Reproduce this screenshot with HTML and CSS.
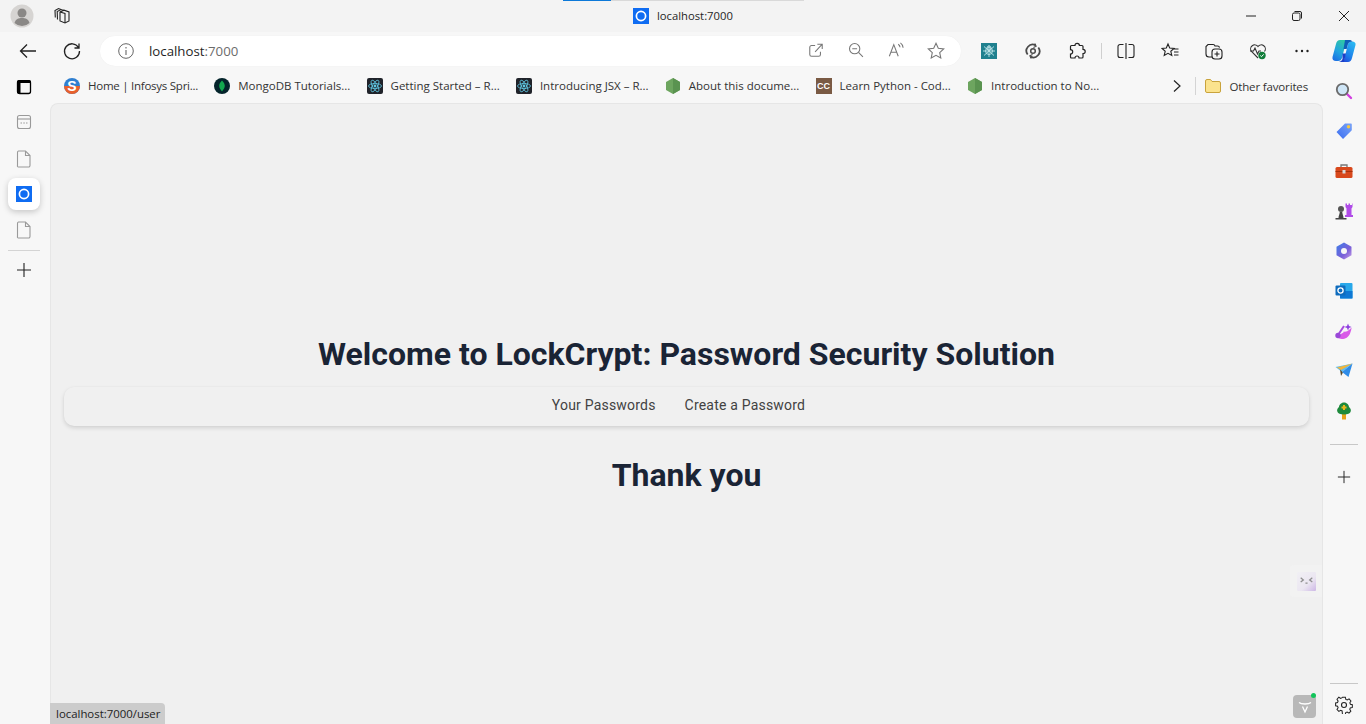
FILE: index.html
```html
<!DOCTYPE html>
<html lang="en">
<head>
<meta charset="utf-8">
<title>localhost:7000</title>
<link rel="stylesheet" href="styles.css">
</head>
<body>
<svg class="defs" aria-hidden="true">
  <defs>
    <symbol id="react" viewBox="0 0 16 16"><rect width="16" height="16" rx="2" fill="#20232a"/><g fill="none" stroke="#5fc8e3" stroke-width=".8"><ellipse cx="8" cy="8" rx="6.5" ry="2.5"/><ellipse cx="8" cy="8" rx="6.5" ry="2.5" transform="rotate(60 8 8)"/><ellipse cx="8" cy="8" rx="6.5" ry="2.5" transform="rotate(120 8 8)"/></g><circle cx="8" cy="8" r="1.4" fill="#5fc8e3"/></symbol>
    <symbol id="node" viewBox="0 0 16 16"><path d="M8 0l7 4v8l-7 4-7-4V4z" fill="#6da55f"/><path d="M8 0l7 4v8l-7 4z" fill="#5a9350"/></symbol>
    <symbol id="page" viewBox="0 0 16 18"><path d="M2.5 1h7l4.500 4.500v10a1.500 1.500 0 0 1-1.500 1.500h-10a1 1 0 0 1-1-1.500V2.500A1.500 1.500 0 0 1 2.500 1zM9.500 1v4.500H14" fill="none" stroke="#9a9a9a" stroke-width="1.100"/></symbol>
    <symbol id="plus" viewBox="0 0 16 16"><path d="M8 1v14M1 8h14" stroke="#222" stroke-width="1.100"/></symbol>
    <symbol id="site" viewBox="0 0 16 16"><rect width="16" height="16" fill="#0f6cf2"/><circle cx="8" cy="8" r="4.600" fill="none" stroke="#fff" stroke-width="1.700"/></symbol>
  </defs>
</svg>

<div class="browser">
  <header class="titlebar">
    <div class="title-left">
      <svg class="avatar" viewBox="0 0 24 24"><circle cx="12" cy="12" r="11.500" fill="#d6d4d2"/><circle cx="12" cy="9" r="4.500" fill="#8a8886"/><path d="M4.500 19c1-4 4-5 7.500-5s6.500 1 7.500 5a11 11 0 0 1-15 0z" fill="#8a8886"/></svg>
      <svg class="tabs-icon" viewBox="0 0 18 18"><g fill="none" stroke="#222" stroke-width="1.100"><path d="M7 5l4-1.800 5 1.800v9l-4 2-5-2z"/><path d="M12 16V6.500L7 5"/><path d="M4.500 12.500L4.200 4.500 8 2.500l3 1"/><path d="M2.300 10.500L2 3.500 5.500 1.500 8 2.400"/></g></svg>
    </div>
    <div class="tab-progress"><span class="tab-progress-done"></span></div>
    <div class="title-center">
      <svg class="i16"><use href="#site"/></svg>
      <span>localhost:7000</span>
    </div>
    <div class="window-controls">
      <svg class="win" viewBox="0 0 12 12"><path d="M1 6h10" stroke="#222" stroke-width="1"/></svg>
      <svg class="win" viewBox="0 0 12 12"><g fill="none" stroke="#222" stroke-width="1"><rect x="1.500" y="3" width="7.500" height="7.500" rx="1.500"/><path d="M3.500 1.500h5.500a1.500 1.500 0 0 1 1.500 1.500v5.500"/></g></svg>
      <svg class="win" viewBox="0 0 12 12"><path d="M1 1l10 10M11 1L1 11" stroke="#222" stroke-width="1"/></svg>
    </div>
  </header>

  <div class="toolbar">
    <div class="cell"><svg class="i20" viewBox="0 0 20 20"><path d="M18 10H2.500M9 3.500L2.500 10 9 16.500" fill="none" stroke="#222" stroke-width="1.300"/></svg></div>
    <div class="cell"><svg class="i20" viewBox="0 0 20 20"><path d="M16.500 6.500A7.500 7.500 0 1 0 17.500 10M17 2.500v4.500h-4.500" fill="none" stroke="#222" stroke-width="1.300"/></svg></div>
    <div class="address">
      <svg class="info" viewBox="0 0 16 16"><circle cx="8" cy="8" r="7.300" fill="none" stroke="#666" stroke-width="1"/><path d="M8 7v5M8 4v1.500" stroke="#666" stroke-width="1.100"/></svg>
      <span class="url">localhost<span class="port">:7000</span></span>
      <div class="address-icons">
        <span class="addr-cell"><svg class="i16" viewBox="0 0 18 18"><path d="M8 4H4a2 2 0 0 0-2 2v8a2 2 0 0 0 2 2h8a2 2 0 0 0 2-2v-3M8 11l7.500-8M10.500 2.500h5.500V8" fill="none" stroke="#777" stroke-width="1.200"/></svg></span>
        <span class="addr-cell"><svg class="i16" viewBox="0 0 18 18"><circle cx="7.500" cy="7.500" r="5.800" fill="none" stroke="#777" stroke-width="1.200"/><path d="M4.800 7.500h5.400M11.800 11.800l5 5" stroke="#777" stroke-width="1.200"/></svg></span>
        <span class="addr-cell"><svg class="i16" viewBox="0 0 18 18"><path d="M1.500 16L6.500 3l5 13M3.200 11.500h6.600M11.500 2.500c1.500 1 2 2.200 2 3.500M14 1c2 1.500 3 3 3 5.500" fill="none" stroke="#777" stroke-width="1.200"/></svg></span>
        <span class="addr-cell"><svg class="i18" viewBox="0 0 18 18"><path d="M9 1.300l2.300 5 5.400.6-4 3.700 1.100 5.400L9 13.300 4.200 16l1.100-5.400-4-3.700 5.400-.6z" fill="none" stroke="#777" stroke-width="1.100"/></svg></span>
      </div>
    </div>
    <div class="tools">
      <div class="cell"><svg class="i16" viewBox="0 0 16 16"><rect width="16" height="16" fill="#20818f"/><g fill="none" stroke="#bfe6ea" stroke-width=".9"><circle cx="8" cy="5" r="2"/><circle cx="8" cy="8" r="3.500"/><path d="M8 2v12M3 3.500l10 9M13 3.500l-10 9M2 8h12"/></g></svg></div>
      <div class="cell"><svg class="i16" viewBox="0 0 18 18"><g fill="none" stroke="#4a4a4a" stroke-width="2"><path d="M3 13A7 7 0 0 1 12 2.700"/><path d="M15 5a7 7 0 0 1-9 10.300"/></g><circle cx="9" cy="9" r="2.600" fill="none" stroke="#4a4a4a" stroke-width="1.700"/><path d="M11 .5l1.500 3.200L9.500 5M7 17.500l-1.500-3.200 3-1.300" fill="none" stroke="#4a4a4a" stroke-width="1.300"/></svg></div>
      <div class="cell"><svg class="i18" viewBox="0 0 18 18"><path d="M7 3.500a2.200 2.200 0 0 1 4.400 0H14a1 1 0 0 1 1 1v2.800a2.200 2.200 0 0 1 0 4.400V15a1 1 0 0 1-1 1h-3a2 2 0 0 0-4 0H3.500a1 1 0 0 1-1-1v-3a2.200 2.200 0 0 0 0-4.400V4.500a1 1 0 0 1 1-1z" fill="none" stroke="#222" stroke-width="1.200"/></svg></div>
      <span class="tool-sep"></span>
      <div class="cell"><svg class="i18" viewBox="0 0 18 18"><path d="M6.500 2.500H3a2 2 0 0 0-2 2v9a2 2 0 0 0 2 2h3.500M11.500 2.500H15a2 2 0 0 1 2 2v9a2 2 0 0 1-2 2h-3.500M9 1v16" fill="none" stroke="#222" stroke-width="1.100"/></svg></div>
      <div class="cell"><svg class="i18" viewBox="0 0 18 18"><path d="M7 2l1.700 4 4.300.4-3.200 2.900 1 4.200L7 11.300l-3.800 2.200 1-4.200L1 6.400 5.300 6zM13 7h4.500M13 10h4.500M13 13h4.500" fill="none" stroke="#222" stroke-width="1.100"/></svg></div>
      <div class="cell"><svg class="i18" viewBox="0 0 18 18"><path d="M7 15H4a3 3 0 0 1-3-3V4.500L3 2.500h5a2 2 0 0 1 2 1.500h2.500a2 2 0 0 1 2 1.700" fill="none" stroke="#222" stroke-width="1.100"/><rect x="7" y="7" width="10" height="10" rx="3" fill="#f7f7f7" stroke="#222" stroke-width="1.100"/><path d="M12 9.500v5M9.500 12h5" stroke="#222" stroke-width="1.100"/></svg></div>
      <div class="cell"><svg class="i18" viewBox="0 0 18 18"><path d="M9 16L2.500 9.500a4 4 0 0 1 6.500-5 4 4 0 0 1 6.500 5" fill="none" stroke="#333" stroke-width="1.100"/><path d="M1 9h3.500l1.500-3 2.500 6 1.500-3h2" fill="none" stroke="#333" stroke-width="1.100"/><circle cx="13" cy="13.500" r="3.700" fill="#117d3a"/><path d="M11.300 13.500l1.200 1.200 2.100-2.300" fill="none" stroke="#fff" stroke-width="1"/></svg></div>
      <div class="cell"><svg class="i18" viewBox="0 0 18 18"><circle cx="3.500" cy="9" r="1.200" fill="#222"/><circle cx="9" cy="9" r="1.200" fill="#222"/><circle cx="14.500" cy="9" r="1.200" fill="#222"/></svg></div>
      <div class="cell"><svg class="copilot" viewBox="0 0 24 24"><defs><linearGradient id="cp1" x1="0.700" y1="0" x2="0.200" y2="1"><stop offset="0" stop-color="#2fc8a4"/><stop offset=".55" stop-color="#22a4e0"/><stop offset="1" stop-color="#1c6fe4"/></linearGradient><linearGradient id="cp2" x1="0.700" y1="0" x2="0.300" y2="1"><stop offset="0" stop-color="#2bb8f2"/><stop offset=".7" stop-color="#1c80ea"/><stop offset="1" stop-color="#1f55e0"/></linearGradient></defs><path d="M8 1h6.500L10 19c-.5 2-2 3-4 3H4c-2.500 0-4-1.500-3.500-4L4 5c.6-2.500 2-4 4-4z" fill="url(#cp1)"/><path d="M20 2.500c2.500 0 4 1.500 3.500 3.500L20 19c-.6 2.500-2 4-4 4h-4.500L16 5c.5-1.500 2-2.500 4-2.500z" fill="url(#cp2)"/><path d="M13 1h4c1.800 0 3 .6 3.500 1.500-2.500 0-4 1-4.500 2.500l-1.300 5H11.500z" fill="#0f5fb8"/><path d="M10.500 14.500h3.500l-2 8c1 .3 3 .5 4 .5H7c1.500-.5 3-1.500 3.500-3z" fill="#1c3fc8"/></svg></div>
    </div>
  </div>

  <div class="workspace">
    <aside class="left-rail">
      <svg class="rail-icon rail-first" viewBox="0 0 16 16"><rect x="1.500" y="1.700" width="13" height="12.800" rx="2" fill="none" stroke="#000" stroke-width="1.300"/><path d="M1 4h14V3a2 2 0 0 0-2-2H3a2 2 0 0 0-2 2zM1 4h3.500v11H3a2 2 0 0 1-2-2z" fill="#000"/></svg>
      <svg class="rail-icon" viewBox="0 0 16 16"><g fill="none" stroke="#9a9a9a" stroke-width="1.100"><rect x="1.500" y="1.500" width="13" height="13" rx="2"/><path d="M1.500 5h13"/></g><path d="M4.500 9h1.500M7.300 9h1.500M10 9h1.500" stroke="#9a9a9a" stroke-width="1.200"/></svg>
      <svg class="rail-icon"><use href="#page"/></svg>
      <div class="rail-active"><svg class="i16"><use href="#site"/></svg></div>
      <svg class="rail-icon"><use href="#page"/></svg>
      <span class="rail-sep"></span>
      <svg class="rail-icon"><use href="#plus"/></svg>
    </aside>

    <div class="center">
      <nav class="bookmarks">
        <a class="bm bm-tight"><svg class="i16" viewBox="0 0 16 16"><circle cx="8" cy="8" r="8" fill="#2f7fd0"/><path d="M0 8a8 8 0 0 0 16 0z" fill="#e8602c"/><text x="8" y="13" text-anchor="middle" class="bm-s">S</text></svg><span>Home | Infosys Spri...</span></a>
        <a class="bm"><svg class="i16" viewBox="0 0 16 16"><circle cx="8" cy="8" r="8" fill="#04242b"/><path d="M8 2.500c2 2 2.800 3.800 2.800 5.500S9.500 11.500 8 13.500C6.500 11.500 5.200 10 5.200 8S6 4.500 8 2.500z" fill="#12a84f"/></svg><span>MongoDB Tutorials...</span></a>
        <a class="bm"><svg class="i16"><use href="#react"/></svg><span>Getting Started – R...</span></a>
        <a class="bm"><svg class="i16"><use href="#react"/></svg><span>Introducing JSX – R...</span></a>
        <a class="bm"><svg class="i16"><use href="#node"/></svg><span>About this docume...</span></a>
        <a class="bm"><span class="cc">CC</span><span>Learn Python - Cod...</span></a>
        <a class="bm"><svg class="i16"><use href="#node"/></svg><span>Introduction to No...</span></a>
        <svg class="chev" viewBox="0 0 10 14"><path d="M2 1.500L8 7l-6 5.500" fill="none" stroke="#222" stroke-width="1.200"/></svg>
        <span class="bm-sep"></span>
        <a class="bm-other"><svg class="i16" viewBox="0 0 16 16"><path d="M.5 3a1.500 1.500 0 0 1 1.500-1.500h3.500L7 3.500h7A1.500 1.500 0 0 1 15.500 5v8a1.500 1.500 0 0 1-1.500 1.500H2A1.500 1.500 0 0 1 .5 13z" fill="#fbe38e" stroke="#c9a33c"/></svg><span>Other favorites</span></a>
      </nav>

      <main class="page">
        <h1 class="page-title">Welcome to LockCrypt: Password Security Solution</h1>
        <div class="page-nav">
          <a class="page-link">Your Passwords</a>
          <a class="page-link">Create a Password</a>
        </div>
        <h2 class="page-thanks">Thank you</h2>
        <div class="status">localhost:7000/user</div>
        <div class="float-tab"><svg class="float-face" viewBox="0 0 18 18"><defs><linearGradient id="ff" x1="0" y1="0" x2="1" y2="1"><stop offset="0" stop-color="#f1f0f4"/><stop offset=".6" stop-color="#ebe6f1"/><stop offset="1" stop-color="#cdb7e6"/></linearGradient></defs><rect width="18" height="18" rx="1" fill="url(#ff)"/><path d="M3.500 5.500L6 7.500l-2.500 2M14.500 5.500L12 7.500l2.500 2M8 10.500h2" fill="none" stroke="#8f8f8f" stroke-width="1.200"/></svg></div>
        <div class="float-badge"><svg class="float-v" viewBox="0 0 14 14"><path d="M1 2.500c1.500 1.300 3 1.500 6 1.500s4.500-.2 6-1.500M4.500 6.500L7 12l2.500-5.500" fill="none" stroke="#fff" stroke-width="1.300"/></svg><span class="float-dot"></span></div>
      </main>
    </div>

    <aside class="right-rail">
      <div class="side-list">
        <svg class="side-icon" viewBox="0 0 18 18"><path d="M11.500 11.500l4.500 4.500" stroke="#d13ee0" stroke-width="2.400" stroke-linecap="round"/><circle cx="7.500" cy="7.500" r="5.700" fill="#cfe6f7" stroke="#6b6b6b" stroke-width="1.800"/></svg>
        <svg class="side-icon" viewBox="0 0 18 18"><defs><linearGradient id="tg" x1="0" y1="1" x2="1" y2="0"><stop offset="0" stop-color="#3a6df0"/><stop offset="1" stop-color="#7aa4f8"/></linearGradient></defs><path d="M1.500 10L10 1.500h6a.8.800 0 0 1 .8.800v6L8 17z" fill="url(#tg)"/><circle cx="13.500" cy="4.800" r="1.700" fill="#f5c842"/></svg>
        <svg class="side-icon" viewBox="0 0 18 18"><path d="M6 5V3h6v2" fill="none" stroke="#777" stroke-width="1.300"/><rect x=".5" y="5" width="17" height="11" rx="1.500" fill="#d8481c"/><path d="M.5 9.500h17" stroke="#a5320f" stroke-width="1"/><rect x="7.500" y="8" width="3" height="3.500" fill="#d8d8d8"/></svg>
        <svg class="side-icon" viewBox="0 0 18 18"><path d="M10.500 1.500h1.500v1.500h1.500V1.500h1.500v1.500H17V1.500h.5V5l-1 1.500v6.500h1.500v2h-8v-2h1.500V6.500l-1-1.500z" fill="#b04be8"/><circle cx="6" cy="7" r="3" fill="#555"/><path d="M3.500 16c0-2 1-3.500 1.300-6h2.400c.3 2.500 1.300 4 1.300 6zM.5 16h11v1.500H.5z" fill="#444"/></svg>
        <svg class="side-icon" viewBox="0 0 18 18"><defs><linearGradient id="m3" x1="0" y1="0" x2="1" y2="1"><stop offset="0" stop-color="#3b7ee8"/><stop offset=".6" stop-color="#7a5fd8"/><stop offset="1" stop-color="#c9a0e8"/></linearGradient></defs><path d="M9 .5l7.500 4.300v8.400L9 17.500 1.500 13.200V4.800z" fill="url(#m3)"/><circle cx="9" cy="9" r="3" fill="#f7f7f7"/></svg>
        <svg class="side-icon" viewBox="0 0 18 18"><rect x="5" y="1" width="12.500" height="15.500" rx="1" fill="#28a8ea"/><path d="M5 9h12.500v7.500H5z" fill="#0f78d4"/><rect x=".5" y="3.500" width="10" height="10" rx="1" fill="#0f6cbd"/><circle cx="5.500" cy="8.500" r="2.600" fill="none" stroke="#fff" stroke-width="1.300"/></svg>
        <svg class="side-icon" viewBox="0 0 18 18"><path d="M2.500 14c3 3.500 10.500 3 12.500-5.500-2 1.800-4 2.500-6.500 2" fill="#d95be8" stroke="#d95be8" stroke-width="2"/><path d="M3 13L9 4" stroke="#a74ae0" stroke-width="2"/><circle cx="3" cy="13.500" r="2.700" fill="#9a48d8"/><path d="M13 1.500l1 2.500 2.500 1-2.500 1-1 2.500-1-2.500-2.500-1 2.500-1z" fill="#8d3fe0"/></svg>
        <svg class="side-icon" viewBox="0 0 18 18"><path d="M.5 5L17.500 1.500 7 10z" fill="#5dbcf0"/><path d="M2 5.500L17.500 1.500 6 8z" fill="#f4b53a"/><path d="M5 7.500L6 14l2-3.500z" fill="#5a4a2c"/><path d="M7 10L17.500 1.500 13.500 15z" fill="#2f8ce8"/></svg>
        <svg class="side-icon" viewBox="0 0 18 18"><rect x="7" y="12" width="4" height="5.500" fill="#e8a21c"/><path d="M9 .5c3 0 5 2.500 5 4.500 1.500 1 2.500 3 1.500 5-.7 1.500-2.500 2.500-6.500 2.500S3.200 11.500 2.500 10C1.500 8 2.500 6 4 5 4 3 6 .5 9 .5z" fill="#1e8a3c"/><path d="M9 3v5M6.500 5.500h5" stroke="#e8b81c" stroke-width="2"/></svg>
        <span class="side-sep"></span>
        <svg class="side-plus"><use href="#plus"/></svg>
      </div>
      <div class="side-bottom">
        <span class="side-sep"></span>
        <svg class="side-gear" viewBox="0 0 18 18"><path d="M7.500 1h3l.5 2.300 1.500.7 2-1.200 2 2.200-1.200 2 .6 1.500 2.100.5v3l-2.200.5-.6 1.500 1.200 2-2 2.100-2-1.200-1.500.6-.5 2.200h-3L7 15.700l-1.500-.6-2 1.200-2-2.100 1.200-2-.6-1.500L0 10.200v-3l2.100-.5.600-1.500-1.200-2 2-2.200 2 1.200L7 1.500z" transform="translate(.6 .3) scale(.93)" fill="none" stroke="#222" stroke-width="1.100"/><circle cx="9" cy="9" r="2.500" fill="none" stroke="#222" stroke-width="1.100"/></svg>
      </div>
    </aside>
  </div>
</div>
</body>
</html>
```

FILE: styles.css
```css
* { box-sizing: border-box; }
html, body { margin: 0; height: 100%; overflow: hidden; }
body { background: #f7f7f7; font-family: "Open Sans", "Noto Sans", sans-serif; color: #1f1f1f; }
.defs { display: none; }
svg { display: block; flex: none; }
.i16 { width: 16px; height: 16px; }
.i18 { width: 18px; height: 18px; }
.i20 { width: 20px; height: 20px; }
.i24 { width: 24px; height: 24px; }
.copilot { width: 24px; height: 24px; margin-right: 4px; }

.browser { width: 1366px; height: 724px; display: flex; flex-direction: column; overflow: hidden; }

.titlebar { height: 32px; flex: none; background: #f3f3f3; position: relative; display: flex; align-items: center; justify-content: space-between; }
.title-left { display: flex; align-items: center; padding-left: 10px; gap: 19px; }
.avatar { width: 24px; height: 24px; }
.tabs-icon { width: 18px; height: 18px; }
.tab-progress { position: absolute; left: 563px; top: 0; width: 241px; height: 1px; background: #d9d9d9; }
.tab-progress-done { display: block; width: 48px; height: 1px; background: #0c78d8; }
.title-center { position: absolute; left: 633px; top: 8px; display: flex; align-items: center; gap: 8px; font-size: 11.25px; line-height: 16px; color: #1f1f1f; }
.window-controls { display: flex; padding-right: 16px; }
.win { width: 12px; height: 12px; }
.win + .win { margin-left: 34px; }
.win:last-child { margin-left: 35px; }

.toolbar { height: 38px; flex: none; background: #f7f7f7; display: flex; align-items: center; padding-left: 6px; position: relative; }
.cell { width: 44px; height: 30px; flex: none; display: flex; align-items: center; justify-content: center; }
.address { width: 861px; height: 30px; margin-left: 6px; background: #fff; border-radius: 15px; display: flex; align-items: center; padding: 0 5px 0 18px; flex: none; box-shadow: 0 0 1px rgba(0,0,0,.08); }
.info { width: 16px; height: 16px; }
.url { margin-left: 15px; font-size: 13.25px; color: #1f1f1f; }
.port { color: #6b6b6b; }
.address-icons { margin-left: auto; display: flex; }
.addr-cell { width: 40px; display: flex; justify-content: center; }
.tools { display: flex; align-items: center; margin-left: 6px; }
.tool-sep { width: 1px; height: 16px; background: #cfcfcf; margin: 0 2px; flex: none; }

.workspace { flex: 1; display: flex; min-height: 0; }
.left-rail { width: 50px; flex: none; display: flex; flex-direction: column; align-items: center; padding-right: 2px; }
.rail-icon { width: 16px; height: 16px; }
.rail-first { margin-top: 9px; }
.left-rail .rail-icon:nth-child(2) { margin-top: 19px; }
.left-rail .rail-icon:nth-child(3) { margin-top: 20px; height: 18px; }
.rail-active { width: 32px; height: 32px; margin-top: 10px; background: #fff; border-radius: 8px; box-shadow: 0 2px 6px rgba(0,0,0,.2); display: flex; align-items: center; justify-content: center; }
.left-rail .rail-icon:nth-child(5) { margin-top: 11px; height: 18px; }
.rail-sep { width: 32px; height: 1px; background: #d4d4d4; margin-top: 11px; }
.left-rail .rail-icon:last-child { margin-top: 11px; }

.center { flex: 1; min-width: 0; display: flex; flex-direction: column; }
.bookmarks { height: 33px; flex: none; display: flex; align-items: center; gap: 16.2px; padding: 0 15px 1px 14px; font-size: 11.5px; color: #333; }
.bm { flex: none; display: flex; align-items: center; gap: 8px; white-space: nowrap; line-height: 16px; }
.bm-tight span { letter-spacing: -.25px; }
.bm-other span { letter-spacing: -.15px; }
.bm-s { font: 700 14px "Liberation Sans", sans-serif; fill: #fff; }
.cc { width: 16px; height: 16px; background: #7a5a44; color: #fff; font: 700 9px/16px "Liberation Sans", sans-serif; text-align: center; }
.chev { width: 10px; height: 14px; margin-left: auto; margin-right: 1px; }
.bm-sep { width: 1px; height: 18px; background: #d4d4d4; margin-left: -4px; margin-right: -7px; }
.bm-other { display: flex; align-items: center; gap: 8px; white-space: nowrap; }

.page { flex: 1; position: relative; background: #f0f0f0; border: 1px solid #e6e6e6; border-bottom: 0; border-radius: 8px 8px 0 0; display: flex; flex-direction: column; align-items: center; justify-content: center; padding: 0 13px; font-family: Roboto, sans-serif; min-height: 0; }
.page-title { margin: 0; font-size: 32px; line-height: 40px; font-weight: 700; color: #1a2435; text-align: center; }
.page-nav { width: 100%; height: 39px; margin-top: 13px; padding: 0 16px 3px 0; border-radius: 10px; background: #f0f0f0; box-shadow: 0 2px 4px rgba(0,0,0,.13), 0 0 2px rgba(0,0,0,.03); display: flex; align-items: center; justify-content: center; gap: 29px; }
.page-link { font-size: 14px; letter-spacing: .2px; color: #424242; }
.page-thanks { margin: 29px 0 0; font-size: 32px; line-height: 40px; font-weight: 700; color: #1a2435; }
.status { position: absolute; left: -1px; bottom: 0; height: 21px; width: 115px; padding-left: 6px; background: #cccccc; border-radius: 0 4px 0 0; font: 11.4px/22px "Open Sans", sans-serif; color: #222; white-space: nowrap; }
.float-tab { position: absolute; right: 0; top: 461px; width: 32px; height: 32px; background: #f2f2f2; border-radius: 4px 0 0 4px; display: flex; align-items: center; justify-content: center; }
.float-face { width: 19px; height: 19px; }
.float-badge { position: absolute; right: 6px; bottom: 6px; width: 23px; height: 23px; border-radius: 4px; background: #b8b8b8; display: flex; align-items: center; justify-content: center; }
.float-v { width: 14px; height: 14px; }
.float-dot { position: absolute; right: 0; top: -2px; width: 5px; height: 5px; border-radius: 50%; background: #12c45a; }

.right-rail { width: 43px; flex: none; display: flex; flex-direction: column; justify-content: space-between; align-items: center; padding-right: 1px; }
.side-list { display: flex; flex-direction: column; align-items: center; gap: 22px; padding-top: 12px; }
.side-icon { width: 18px; height: 18px; }
.side-sep { width: 28px; height: 1px; background: #c8c8c8; margin-top: 2px; }
.side-plus { width: 14px; height: 14px; margin-top: 3px; }
.side-bottom { display: flex; flex-direction: column; align-items: center; gap: 12px; padding-bottom: 10px; }
.side-gear { width: 18px; height: 18px; }
```
